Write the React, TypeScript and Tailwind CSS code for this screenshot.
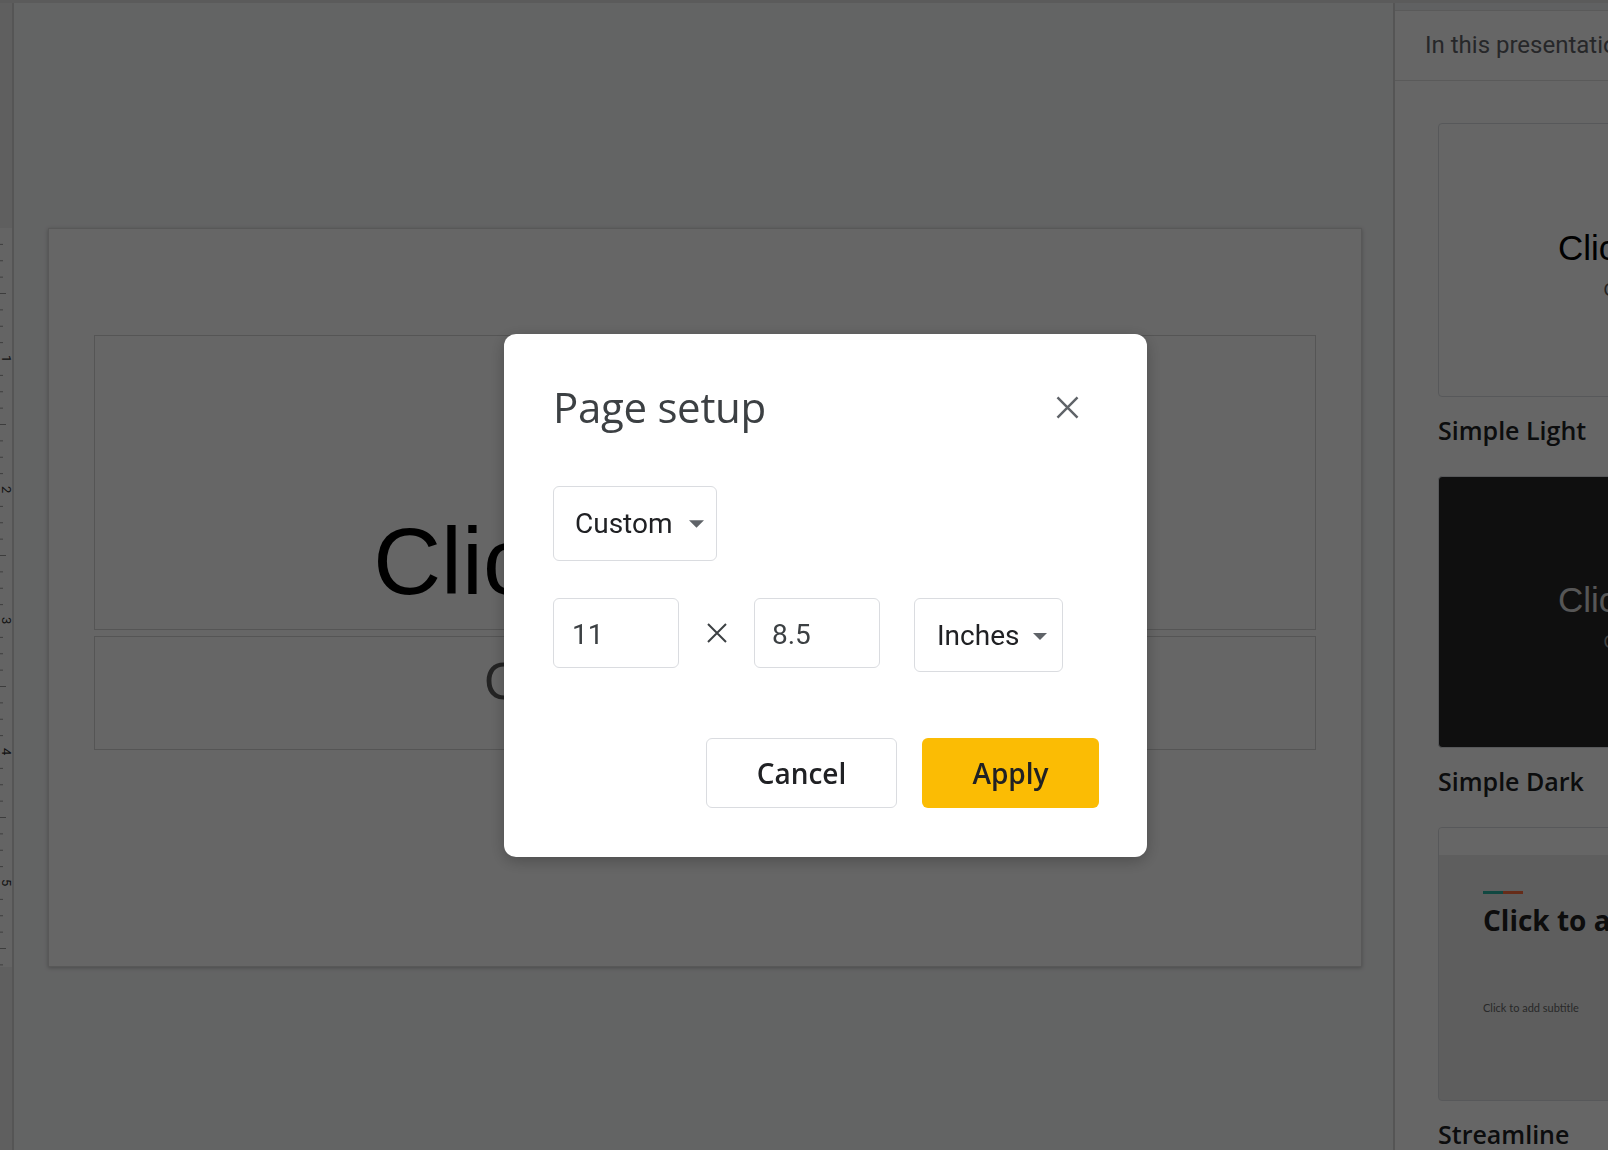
import React from 'react';

const inchMarks = [1, 2, 3, 4, 5];

function Ruler() {
  const ticks = Array.from({ length: 46 }, (_, i) => i);
  return (
    <aside className="flex w-[14px] shrink-0 flex-col border-r-2 border-[#d5d5d5]">
      <div className="h-[225px] bg-[#eeeeee]" />
      <div className="h-[739px] bg-[#fafafa]">
        <svg width="12" height="739" viewBox="0 0 12 739">
          {ticks.map((i) => {
            const y = i * 16.375;
            if (i % 8 === 0) return null;
            const long = i % 4 === 0;
            return <line key={i} x1="0" x2={long ? 6 : 3} y1={y} y2={y} stroke="#9a9a9a" strokeWidth="1" />;
          })}
          {inchMarks.map((n) => (
            <text
              key={n}
              x="0"
              y="0"
              fontSize="13"
              fontFamily="Roboto, sans-serif"
              fill="#333"
              transform={`translate(2 ${n * 131 - 4}) rotate(90)`}
            >
              {n}
            </text>
          ))}
        </svg>
      </div>
      <div className="flex-1 bg-[#eeeeee]" />
    </aside>
  );
}

function Slide() {
  return (
    <div className="h-[739px] w-[1314px] border border-[#dcdcdc] bg-white pl-[45px] pt-[106px] shadow-[0_1px_4px_rgba(0,0,0,0.25)]">
      <div className="flex h-[295px] w-[1222px] items-end justify-center border border-[#d4d4d4] pb-[20px]">
        <span className="font-['Liberation_Sans',Arial,sans-serif] text-[94px] leading-none text-black">
          Click to add title
        </span>
      </div>
      <div className="mt-[6px] flex h-[114px] w-[1222px] justify-center border border-[#d4d4d4] pt-[19px]">
        <span className="font-['Liberation_Sans',Arial,sans-serif] text-[51px] leading-none text-[#595959]">
          Click to add subtitle
        </span>
      </div>
    </div>
  );
}

function ThemeLabel({ children }: { children: React.ReactNode }) {
  return (
    <div className="mb-[29px] mt-[16px] h-[34px] font-['Open_Sans',sans-serif] text-[25px] font-semibold leading-[34px] text-[#202124]">
      {children}
    </div>
  );
}

function ThemesPanel() {
  return (
    <aside className="flex w-[215px] shrink-0 flex-col border-l-2 border-[#d5d5d5] bg-white">
      <div className="h-[8px] border-b border-[#e0e0e0] bg-[#f1f3f4]" />
      <div className="flex h-[72px] items-center whitespace-nowrap border-b border-[#e0e0e0] pl-[30px] text-[24px] leading-none text-[#5f6368]">
        In this presentation
      </div>
      <div className="overflow-hidden pl-[43px] pt-[42px]">
        <div className="flex h-[274px] w-[487px] flex-col items-center rounded-[4px] border border-[#dadce0] bg-white pt-[106px] font-['Liberation_Sans',Arial,sans-serif]">
          <span className="whitespace-nowrap text-[35px] leading-none text-black">Click to add title</span>
          <span className="mt-[16px] whitespace-nowrap text-[18px] leading-none text-[#595959]">Click to add subtitle</span>
        </div>
        <ThemeLabel>Simple Light</ThemeLabel>

        <div className="flex h-[272px] w-[487px] flex-col items-center rounded-[4px] border border-[#dadce0] bg-[#262626] pt-[105px] font-['Liberation_Sans',Arial,sans-serif]">
          <span className="whitespace-nowrap text-[35px] leading-none text-[#d6d6d6]">Click to add title</span>
          <span className="mt-[16px] whitespace-nowrap text-[18px] leading-none text-[#a0a0a0]">Click to add subtitle</span>
        </div>
        <ThemeLabel>Simple Dark</ThemeLabel>

        <div className="flex h-[274px] w-[487px] flex-col overflow-hidden rounded-[4px] border border-[#dadce0] bg-[#ebecec]">
          <div className="h-[27px] shrink-0 bg-white" />
          <div className="pl-[44px] pt-[36px]">
            <div className="flex h-[3px] w-[40px]">
              <div className="w-1/2 bg-[#2bb3a3]" />
              <div className="w-1/2 bg-[#ff6e40]" />
            </div>
            <div className="mt-[8px] whitespace-nowrap font-['Open_Sans',sans-serif] text-[28px] font-bold leading-[36px] text-[#212121]">
              Click to add title
            </div>
            <div className="mt-[64px] whitespace-nowrap font-['Lato',sans-serif] text-[11px] leading-none text-[#666666]">
              Click to add subtitle
            </div>
          </div>
        </div>
        <ThemeLabel>Streamline</ThemeLabel>
      </div>
    </aside>
  );
}

function Caret({ width }: { width: number }) {
  return (
    <svg width={width} height={Math.round(width / 2)} viewBox="0 0 10 5" className="shrink-0">
      <path d="M0 0h10L5 5z" fill="#5f6368" />
    </svg>
  );
}

function PageSetupDialog() {
  return (
    <div className="fixed inset-0 bg-black/60">
      <div className="absolute left-[504px] top-[334px] w-[643px] rounded-[12px] bg-white pb-[49px] pl-[49px] pr-[48px] pt-[52px] shadow-[0_4px_16px_rgba(0,0,0,0.25)]">
        <div className="flex h-[42px] items-center justify-between">
          <h2 className="font-['Open_Sans',sans-serif] text-[42px] font-normal leading-[42px] tracking-[-0.3px] text-[#3c4043]">
            Page setup
          </h2>
          <button className="mr-[13px] flex h-[37px] w-[37px] items-center justify-center">
            <svg width="37" height="37" viewBox="0 0 24 24">
              <path d="M5.5 5.5l13 13M18.5 5.5l-13 13" stroke="#5f6368" strokeWidth="1.6" />
            </svg>
          </button>
        </div>

        <button className="mt-[58px] flex h-[75px] w-[164px] items-center rounded-[6px] border border-[#dadce0] pl-[21px] text-[28px] leading-none text-[#202124]">
          <span>Custom</span>
          <span className="ml-[16px] flex">
            <Caret width={15} />
          </span>
        </button>

        <div className="mt-[37px] flex items-start">
          <div className="flex h-[70px] w-[126px] items-center rounded-[6px] border border-[#dadce0] pl-[18px] pt-[3px] text-[28px] leading-none text-[#3c4043]">
            11
          </div>
          <div className="flex h-[70px] w-[75px] items-center justify-center">
            <svg width="20" height="20" viewBox="0 0 20 20">
              <path d="M1 1l18 18M19 1L1 19" stroke="#3c4043" strokeWidth="2" />
            </svg>
          </div>
          <div className="flex h-[70px] w-[126px] items-center rounded-[6px] border border-[#dadce0] pl-[17px] pt-[3px] text-[28px] leading-none text-[#3c4043]">
            8.5
          </div>
          <button className="ml-[34px] flex h-[74px] w-[149px] items-center justify-between rounded-[6px] border border-[#dadce0] pl-[22px] pr-[15px] pt-[2px] text-[28px] leading-none text-[#202124]">
            <span>Inches</span>
            <Caret width={14} />
          </button>
        </div>

        <div className="mt-[66px] flex justify-end gap-[25px] font-['Open_Sans',sans-serif] text-[28px] font-semibold">
          <button className="h-[70px] w-[191px] rounded-[6px] border border-[#dadce0] bg-white text-[#202124]">
            Cancel
          </button>
          <button className="h-[70px] w-[177px] rounded-[6px] bg-[#fbbc04] text-[#202124]">Apply</button>
        </div>
      </div>
    </div>
  );
}

export default function App() {
  return (
    <div className="flex h-[1150px] w-[1608px] overflow-hidden border-t-[3px] border-[#e3e3e3] bg-[#f8f9fa] font-['Roboto',sans-serif]">
      <Ruler />
      <main className="min-w-0 flex-1 pl-[34px] pt-[225px]">
        <Slide />
      </main>
      <ThemesPanel />
      <PageSetupDialog />
    </div>
  );
}
